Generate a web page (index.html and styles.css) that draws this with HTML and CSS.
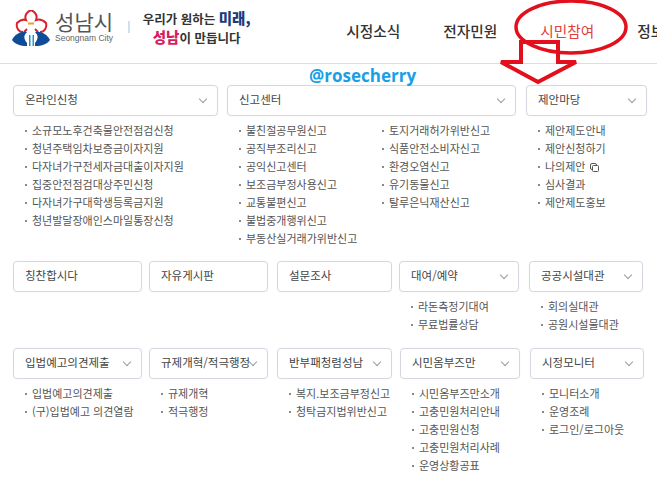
FILE: index.html
```html
<!DOCTYPE html>
<html lang="ko">
<head>
<meta charset="utf-8">
<meta name="viewport" content="width=device-width, initial-scale=1.0">
<title>성남시 시민참여</title>
<link rel="stylesheet" href="styles.css">
</head>
<body>

<!-- HEADER -->
<header class="header">
  <a class="logo">
    <svg class="logo-mark" width="38" height="36" viewBox="0 0 38 36">
      <path d="M11 22C6 22 4 17 5 13C8 10 11 9 14 10C12 5 15 2 19 0C23 2 26 5 24 10C27 9 31 10 34 13C35 17 33 22 28 22" fill="none" stroke="#d8232f" stroke-width="2"/>
      <path d="M12 22l3-3M26 22l-3-3" fill="none" stroke="#d8232f" stroke-width="2"/>
      <rect x="16" y="12.500" width="6" height="2" fill="#f0a020"/>
      <path d="M0 30C3 24 9 21 15 22C12 25 11 28 15 33V36C8 36 3 34 0 30Z" fill="#0f4c97"/>
      <path d="M38 30C35 24 29 21 23 22C26 25 27 28 23 33V36C30 36 35 34 38 30Z" fill="#0f4c97"/>
      <path d="M17 25h1.500v11h-1.500zM20.500 25h1.500v11h-1.500z" fill="#2d8fc9"/>
    </svg>
    <span class="logo-text">
      <span class="logo-ko">성남시</span>
      <span class="logo-en">Seongnam City</span>
    </span>
  </a>
  <span class="divider"></span>
  <p class="slogan">
    <span>우리가 원하는 <b class="navy">미래,</b></span>
    <span><b class="pink">성남</b>이 만듭니다</span>
  </p>
  <nav class="gnb">
    <a>시정소식</a>
    <a>전자민원</a>
    <a class="on">시민참여</a>
    <a>정보공개</a>
  </nav>
</header>

<!-- MENU -->
<main class="menu">
  <section class="row row-a">
    <div>
      <div class="box">온라인신청<i class="chev"></i></div>
      <ul class="links">
        <li>소규모노후건축물안전점검신청</li>
        <li>청년주택임차보증금이자지원</li>
        <li>다자녀가구전세자금대출이자지원</li>
        <li>집중안전점검대상주민신청</li>
        <li>다자녀가구대학생등록금지원</li>
        <li>청년발달장애인스마일통장신청</li>
      </ul>
    </div>
    <div>
      <div class="box">신고센터<i class="chev"></i></div>
      <div class="two-col">
        <ul class="links">
          <li>불친절공무원신고</li>
          <li>공직부조리신고</li>
          <li>공익신고센터</li>
          <li>보조금부정사용신고</li>
          <li>교통불편신고</li>
          <li>불법중개행위신고</li>
          <li>부동산실거래가위반신고</li>
        </ul>
        <ul class="links">
          <li>토지거래허가위반신고</li>
          <li>식품안전소비자신고</li>
          <li>환경오염신고</li>
          <li>유기동물신고</li>
          <li>탈루은닉재산신고</li>
        </ul>
      </div>
    </div>
    <div>
      <div class="box">제안마당<i class="chev"></i></div>
      <ul class="links">
        <li>제안제도안내</li>
        <li>제안신청하기</li>
        <li>나의제안
          <svg class="popup" width="9" height="9" viewBox="0 0 9 9"><rect x="0.500" y="0.500" width="6" height="6" rx="1.500" fill="none" stroke="#555"/><rect x="2.500" y="2.500" width="6" height="6" rx="1" fill="#fff" stroke="#555"/></svg>
        </li>
        <li>심사결과</li>
        <li>제안제도홍보</li>
      </ul>
    </div>
  </section>

  <section class="row row-b">
    <div><div class="box">칭찬합시다</div></div>
    <div><div class="box">자유게시판</div></div>
    <div><div class="box">설문조사</div></div>
    <div>
      <div class="box">대여/예약<i class="chev"></i></div>
      <ul class="links">
        <li>라돈측정기대여</li>
        <li>무료법률상담</li>
      </ul>
    </div>
    <div>
      <div class="box">공공시설대관<i class="chev"></i></div>
      <ul class="links">
        <li>회의실대관</li>
        <li>공원시설물대관</li>
      </ul>
    </div>
  </section>

  <section class="row row-c">
    <div>
      <div class="box">입법예고의견제출<i class="chev"></i></div>
      <ul class="links">
        <li>입법예고의견제출</li>
        <li>(구)입법예고 의견열람</li>
      </ul>
    </div>
    <div>
      <div class="box">규제개혁/적극행정<i class="chev"></i></div>
      <ul class="links">
        <li>규제개혁</li>
        <li>적극행정</li>
      </ul>
    </div>
    <div>
      <div class="box">반부패청렴성남<i class="chev"></i></div>
      <ul class="links">
        <li>복지.보조금부정신고</li>
        <li>청탁금지법위반신고</li>
      </ul>
    </div>
    <div>
      <div class="box">시민옴부즈만<i class="chev"></i></div>
      <ul class="links">
        <li>시민옴부즈만소개</li>
        <li>고충민원처리안내</li>
        <li>고충민원신청</li>
        <li>고충민원처리사례</li>
        <li>운영상황공표</li>
      </ul>
    </div>
    <div>
      <div class="box">시정모니터<i class="chev"></i></div>
      <ul class="links">
        <li>모니터소개</li>
        <li>운영조례</li>
        <li>로그인/로그아웃</li>
      </ul>
    </div>
  </section>
</main>

<!-- hand-drawn marks on top of the page -->
<span class="watermark">@rosecherry</span>
<svg class="marks" width="657" height="90" viewBox="0 0 657 90">
  <ellipse cx="571" cy="27" rx="55" ry="26" fill="none" stroke="#e2101c" stroke-width="3.500"/>
  <path d="M521 42H558V62H576L538 82L501 62H521Z" fill="none" stroke="#e2101c" stroke-width="4"/>
</svg>

</body>
</html>
```

FILE: styles.css
```css
* {
  box-sizing: border-box;
}

html, body {
  margin: 0;
  height: 480px;
  overflow: hidden;
  background: #fff;
}

body {
  position: relative;
  font-family: "Noto Sans CJK KR", "Noto Sans", sans-serif;
  color: #444;
}

/* header */
.header {
  display: flex;
  align-items: center;
  height: 64px;
  padding-left: 12px;
  border-bottom: 1px solid #dcdce4;
  white-space: nowrap;
  overflow: hidden;
}

.header > * {
  flex: none;
}

.logo {
  display: flex;
  align-items: center;
  gap: 5px;
  margin-top: -10px;
}

.logo-mark {
  flex: none;
  margin-top: 2px;
}

.logo-text {
  display: flex;
  flex-direction: column;
  align-items: center;
}

.logo-ko {
  font-size: 21px;
  line-height: 24px;
  color: #555;
}

.logo-en {
  font-family: "Liberation Sans", sans-serif;
  font-size: 8.500px;
  line-height: 11px;
  color: #666;
}

.divider {
  width: 2px;
  height: 12px;
  margin: -9px 11px 0 15px;
  background: #cfe0ee;
}

.slogan {
  display: flex;
  flex-direction: column;
  align-items: center;
  margin: -7px 0 0;
  width: 111px;
  font-size: 12.500px;
  font-weight: 700;
  line-height: 18px;
  color: #333;
}

.navy {
  font-size: 14.500px;
  color: #1b3b7c;
}

.pink {
  font-size: 14.500px;
  color: #d81c5e;
}

.gnb {
  display: flex;
  gap: 43px;
  margin-left: 94px;
  margin-top: -2px;
  font-size: 14.700px;
  font-weight: 500;
  color: #333;
}

.gnb .on {
  color: #e0413c;
  font-weight: 400;
}

/* menu rows */
.menu {
  padding: 21px 0 0 13px;
}

.row {
  display: grid;
}

.row-a {
  grid-template-columns: 214px 299px 121px;
  margin-bottom: 14px;
}

.row-a > div:nth-child(1) {
  padding-right: 9px;
}

.row-a > div:nth-child(2) {
  padding-right: 10px;
}

.row-b {
  grid-template-columns: 136px 128px 122px 130px 114px;
  margin-bottom: 15px;
}

.row-c {
  grid-template-columns: 136px 128px 123px 130px 114px;
}

.row-b > div:nth-child(1),
.row-c > div:nth-child(1),
.row-b > div:nth-child(3) {
  padding-right: 7px;
}

.row-c > div:nth-child(3) {
  padding-right: 8px;
}

.row-b > div:nth-child(2),
.row-c > div:nth-child(2) {
  padding-right: 9px;
}

.row-b > div:nth-child(4),
.row-c > div:nth-child(4) {
  padding-right: 10px;
}

.box {
  display: flex;
  align-items: center;
  justify-content: space-between;
  height: 31px;
  padding: 0 10px 3px 11px;
  border: 1px solid #d6d6e2;
  border-radius: 4px;
  box-shadow: 0 0 1px #e4e4ec;
  font-size: 11.500px;
  color: #444;
  white-space: nowrap;
}

.chev {
  flex: none;
  width: 6px;
  height: 6px;
  margin: 0 1px 0 0;
  border-right: 1px solid #9a9aa4;
  border-bottom: 1px solid #9a9aa4;
  transform: rotate(45deg);
}

.links {
  margin: 5px 0 0;
  padding: 0 0 0 12px;
  list-style: none;
  font-size: 11px;
  line-height: 18px;
  color: #555;
  white-space: nowrap;
}

.links li::before {
  content: "";
  display: inline-block;
  width: 2px;
  height: 2px;
  margin: 0 5px 3px 0;
  background: #888;
}

.two-col {
  display: grid;
  grid-template-columns: 143px 1fr;
}

.popup {
  margin-left: 1px;
  vertical-align: -1px;
}

/* overlays */
.watermark {
  position: absolute;
  left: 309px;
  top: 64px;
  font-family: "Open Sans", sans-serif;
  font-size: 17px;
  font-weight: 700;
  line-height: 24px;
  color: #1a9fe6;
}

.marks {
  position: absolute;
  left: 0;
  top: 0;
}
```
